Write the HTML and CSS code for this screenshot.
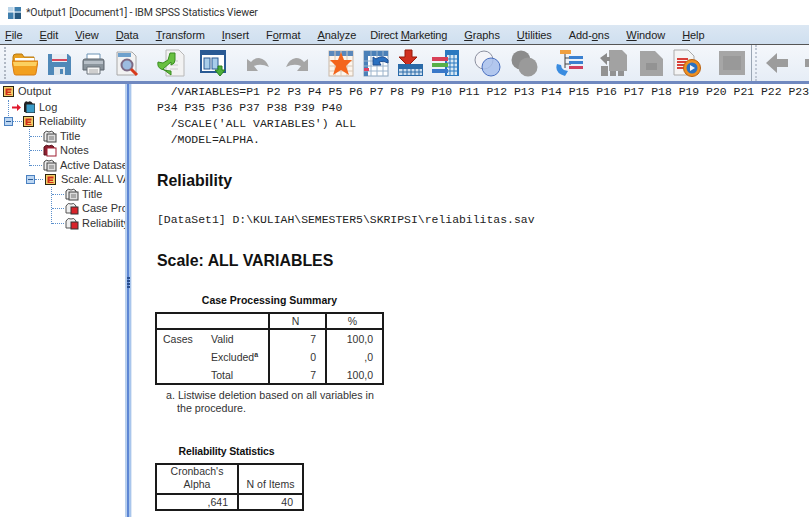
FILE: index.html
```html
<!DOCTYPE html>
<html>
<head>
    <title>*Output1 [Document1] - IBM SPSS Statistics Viewer</title>
    <link rel="stylesheet" href="styles.css">
</head>
<body>
    <svg class="defs" width="0" height="0">
        <symbol id="folder-book" viewBox="0 0 11 11">
            <rect x=".5" y=".5" width="10" height="10" fill="#f2cf68" stroke="#2c2410"/>
            <path d="M2.500 2.500h6v2h-4v1h3.500v1.500h-3.500v1h4v1h-6z" fill="#d0301c"/>
        </symbol>
        <symbol id="doc-page" viewBox="0 0 14 14">
            <path d="M1 4q2-3 5-1q3-2 5 1v8h-10z" fill="#f0f0f0" stroke="#444"/>
            <rect x="4" y="5" width="9" height="8" fill="#ddd" stroke="#444"/>
            <path d="M6 8h5M6 10h5" stroke="#777"/>
        </symbol>
        <symbol id="doc-red" viewBox="0 0 14 14">
            <path d="M1 5q2-4 5-2q3-2 5 2v7h-10z" fill="#eee" stroke="#555"/>
            <rect x="6" y="6" width="7" height="7" fill="#d8232a" stroke="#333"/>
        </symbol>
        <symbol id="undo-arrow" viewBox="0 0 23 28">
            <path d="M0 10v12h11l-4-5q7-3 15 1q-3-8-10-9q-5 0-8 4z" fill="#a6a6a6"/>
        </symbol>
    </svg>

    <div class="title-bar">
        <svg class="app-icon" width="15" height="15" viewBox="0 0 15 15">
            <rect x="1" y="2" width="13" height="12" fill="#3f7fae"/>
            <rect x="1" y="2" width="6" height="5" fill="#bcd6ea"/>
            <rect x="8" y="8" width="6" height="6" fill="#25587f"/>
            <path d="M7 1v13M1 7h13" stroke="#fff"/>
        </svg>
        <span>*Output1 [Document1] - IBM SPSS Statistics Viewer</span>
    </div>

    <div class="menu-bar">
        <span><u>F</u>ile</span>
        <span><u>E</u>dit</span>
        <span><u>V</u>iew</span>
        <span><u>D</u>ata</span>
        <span><u>T</u>ransform</span>
        <span><u>I</u>nsert</span>
        <span>F<u>o</u>rmat</span>
        <span><u>A</u>nalyze</span>
        <span class="menu-long">Direct <u>M</u>arketing</span>
        <span><u>G</u>raphs</span>
        <span><u>U</u>tilities</span>
        <span>Add-<u>o</u>ns</span>
        <span><u>W</u>indow</span>
        <span><u>H</u>elp</span>
    </div>

    <div class="tool-bar">
        <div class="grip"></div>
        <!-- open -->
        <svg width="26" height="28" viewBox="0 0 26 28">
            <path d="M1 8q0-3 3-3h6l2 3h10v5h-21z" fill="#e8a020" stroke="#b87810"/>
            <path d="M3 9h19v4h-19z" fill="#fff"/>
            <path d="M0 12h26l-2 12q0 2-2 2h-18q-2 0-2-2z" fill="#f2a020" stroke="#d87c10"/>
            <path d="M1 13h24l-1 4h-22z" fill="#fcd060"/>
        </svg>
        <!-- save -->
        <svg width="23" height="28" viewBox="0 0 23 28">
            <path d="M0 5h20l3 3v18h-23z" fill="#4f88b8"/>
            <path d="M4 5h15v8h-15z" fill="#e8eef4"/>
            <path d="M4 10h15v2h-15z" fill="#d8485c"/>
            <path d="M6 18h11v8h-11z" fill="#dfe6ec"/>
            <path d="M12 20h3v5h-3z" fill="#4f88b8"/>
        </svg>
        <!-- print -->
        <svg width="23" height="28" viewBox="0 0 23 28">
            <path d="M5 5h13v8h-13z" fill="#fff" stroke="#6a92b4"/>
            <path d="M1 12q0-2 2-2h17q2 0 2 2v9h-21z" fill="#8a949c" stroke="#5c646c"/>
            <path d="M2 12h19v3h-19z" fill="#b8c0c8"/>
            <path d="M5 18h13v7h-13z" fill="#f4f4f4" stroke="#6c747c"/>
            <path d="M7 21h9M7 23h9" stroke="#aaa"/>
        </svg>
        <!-- preview -->
        <svg width="24" height="28" viewBox="0 0 24 28">
            <path d="M1 3h15l4 4v19h-19z" fill="#f2f2f2" stroke="#a8a8a8"/>
            <path d="M2 4h13v4h-13z" fill="#6ea0cc"/>
            <circle cx="11" cy="16" r="5.500" fill="#9cbce0" stroke="#7c6a84" stroke-width="2"/>
            <path d="M15 20l6 6" stroke="#d83a1c" stroke-width="3"/>
        </svg>
        <!-- go to data -->
        <svg width="28" height="28" viewBox="0 0 28 28">
            <path d="M9 1h13l5 5v21h-18z" fill="#f2f2f2" stroke="#b8b8b8"/>
            <path d="M13 12h8M13 16h8M13 20h8" stroke="#ccc"/>
            <path d="M13 4h5v7q0 4-4 5v-3l-8 7 8 6v-4q-5 0-10-2q-4-2-3-7l5 1 5-3z" fill="#68c040" stroke="#388c20"/>
        </svg>
        <!-- designate window -->
        <svg width="26" height="28" viewBox="0 0 26 28">
            <rect x="1" y="2" width="24" height="21" fill="#fff" stroke="#2a5a94" stroke-width="2"/>
            <rect x="1" y="2" width="24" height="4" fill="#2a5a94"/>
            <rect x="4" y="9" width="6" height="11" fill="#a8cdea" stroke="#2a5a94"/>
            <rect x="12" y="9" width="6" height="11" fill="#a8cdea" stroke="#2a5a94"/>
            <path d="M18 17h4v4h3l-5 6-5-6h3z" fill="#4caf3a" stroke="#2a8020"/>
        </svg>
        <!-- undo, redo -->
        <svg width="23" height="28"><use href="#undo-arrow"/></svg>
        <svg class="mirror" width="23" height="28"><use href="#undo-arrow"/></svg>
        <!-- case table star -->
        <svg width="26" height="28" viewBox="0 0 26 28">
            <rect x="1" y="2" width="24" height="25" fill="#fdf5ec" stroke="#c8b8a8"/>
            <path d="M1 2h24v5h-24z" fill="#5a88bc"/>
            <path d="M7 2v25M13 2v25M19 2v25M1 12h24M1 17h24M1 22h24" stroke="#d8c8b8"/>
            <path d="M13 3l3 8h8l-6 6 3 9-8-5-8 5 3-9-6-6h8z" fill="#f4651c"/>
        </svg>
        <!-- go to variable -->
        <svg width="26" height="28" viewBox="0 0 26 28">
            <rect x="1" y="2" width="24" height="25" fill="#fff" stroke="#8ca4bc"/>
            <path d="M1 2h24v5h-24zM1 2h4v25h-4z" fill="#4a80b8"/>
            <path d="M8 2v25M14 2v25M20 2v25M1 12h24M1 17h24M1 22h24" stroke="#9cb4cc"/>
            <path d="M1 19h5v3h-5z" fill="#e04060"/>
            <path d="M25 11q-5-6-12-1l-3-2v8h8l-2-3q4-2 9 1z" fill="#2a70c0" stroke="#1c4c90"/>
        </svg>
        <!-- insert cases -->
        <svg width="27" height="28" viewBox="0 0 27 28">
            <path d="M8 1h7v7h5l-9 9-9-9h6z" fill="#d03020" stroke="#981808"/>
            <rect x="1" y="15" width="25" height="12" fill="#2a6aa8"/>
            <path d="M2 20h23v6h-23z" fill="#cfe0f0"/>
            <path d="M6 20v7M10 20v7M14 20v7M18 20v7M22 20v7M2 23h23" stroke="#2a6aa8"/>
        </svg>
        <!-- insert variable -->
        <svg width="28" height="28" viewBox="0 0 28 28">
            <rect x="14" y="1" width="14" height="26" fill="#2a78c0"/>
            <path d="M16 6h10v20h-10z" fill="#d8e8f4"/>
            <path d="M19 6v20M23 6v20M16 10h10M16 14h10M16 18h10M16 22h10" stroke="#2a78c0"/>
            <rect x="1" y="8" width="16" height="4" fill="#d84058"/>
            <rect x="1" y="14" width="16" height="4" fill="#58b048"/>
            <rect x="1" y="20" width="16" height="4" fill="#3a78c8"/>
        </svg>
        <!-- weight circles -->
        <svg width="27" height="28" viewBox="0 0 27 28">
            <circle cx="10" cy="11" r="9" fill="#f4f4f8" stroke="#8c90a0"/>
            <circle cx="17" cy="18" r="9" fill="#a8c0ec" stroke="#4a70c0" fill-opacity=".85"/>
        </svg>
        <!-- grey circles -->
        <svg width="27" height="28" viewBox="0 0 27 28">
            <circle cx="10" cy="11" r="9.500" fill="#8c8c8c"/>
            <circle cx="17" cy="18" r="9.500" fill="#9a9a9a"/>
        </svg>
        <!-- variable tree -->
        <svg width="28" height="28" viewBox="0 0 28 28">
            <rect x="5" y="1" width="11" height="4" fill="#f0a040"/>
            <path d="M10 5v14M10 9h6M10 15h6" stroke="#444"/>
            <rect x="14" y="7" width="14" height="3" fill="#3a80d0"/>
            <rect x="14" y="12" width="14" height="3" fill="#3a80d0"/>
            <rect x="14" y="17" width="14" height="3" fill="#d04060"/>
            <path d="M2 15q-3 9 8 12l3-5-4-1q-3-2-3-5z" fill="#3a8ce0"/>
        </svg>
        <!-- grey doc tools -->
        <svg width="27" height="28" viewBox="0 0 27 28">
            <path d="M9 1h13l5 5v16h-18z" fill="#a2a2a2"/>
            <path d="M0 9l7-5v4h3v4h-3v4z" fill="#8a8a8a"/>
            <path d="M1 17h7v10h-7zM10 22h6v5h-6zM18 22h6v5h-6z" fill="#929292"/>
        </svg>
        <svg width="23" height="28" viewBox="0 0 23 28">
            <path d="M0 2h15l8 8v17h-23z" fill="#a4a4a4"/>
            <path d="M6 14h11v7h-11z" fill="#939393"/>
        </svg>
        <!-- script run -->
        <svg width="28" height="28" viewBox="0 0 28 28">
            <path d="M1 1h14l6 6v19h-20z" fill="#f4f4f4" stroke="#aaa"/>
            <path d="M4 10h11M4 13h9M4 16h9M4 19h7" stroke="#d84038" stroke-width="2"/>
            <circle cx="19" cy="19" r="8.500" fill="#f09020" stroke="#b86010"/>
            <circle cx="19" cy="19" r="5.500" fill="#2a70c0"/>
            <path d="M17 16l5 3-5 3z" fill="#f4f4f4"/>
        </svg>
        <!-- grey box -->
        <svg width="26" height="28" viewBox="0 0 26 28">
            <rect y="2" width="26" height="24" fill="#a6a6a6"/>
            <rect x="4" y="7" width="18" height="14" fill="#999"/>
        </svg>
        <div class="tool-sep"></div>
        <!-- previous -->
        <svg width="22" height="28" viewBox="0 0 22 28">
            <path d="M0 14l11-10v6h11v8h-11v6z" fill="#9c9c9c"/>
        </svg>
        <svg width="22" height="28" viewBox="0 0 22 28">
            <path d="M0 10h22v8h-22z" fill="#9c9c9c"/>
        </svg>
    </div>

    <div class="pane-strip"></div>

    <div class="panes">
        <nav class="tree">
            <div class="tree-row top">
                <svg class="node" width="11" height="11"><use href="#folder-book"/></svg>Output
            </div>
            <div class="tree-branch b0">
                <div class="tree-row lvl1 log">
                    <svg class="arrow" width="9" height="7" viewBox="0 0 9 7"><path d="M0 2.500h5v-2.500l4 3.500-4 3.500v-2.500h-5z" fill="#e0182c"/></svg>
                    <svg class="node" width="12" height="13" viewBox="0 0 12 13">
                        <path d="M1 4q1-4 4-2q3-2 5 2v8h-9z" fill="#222"/>
                        <rect x="3" y="4" width="9" height="9" fill="#3a9cc8" stroke="#222"/>
                    </svg>Log
                </div>
                <div class="tree-row lvl1 branch-node">
                    <span class="toggle t0"></span>
                    <svg class="node" width="11" height="11"><use href="#folder-book"/></svg>Reliability
                </div>
            </div>
            <div class="tree-branch b1">
                <div class="tree-row lvl2 leaf"><svg class="node" width="14" height="14"><use href="#doc-page"/></svg>Title</div>
                <div class="tree-row lvl2 leaf">
                    <svg class="node" width="14" height="14" viewBox="0 0 14 14">
                        <path d="M1 4q2-3 5-1q3-2 5 1v8h-10z" fill="#8c2030" stroke="#541018"/>
                        <rect x="4" y="5" width="9" height="8" fill="#fff" stroke="#a01c30"/>
                    </svg>Notes
                </div>
                <div class="tree-row lvl2 leaf"><svg class="node" width="14" height="14"><use href="#doc-page"/></svg>Active Dataset</div>
                <div class="tree-row lvl2 branch-node leaf">
                    <span class="toggle t1"></span>
                    <svg class="node book-small" width="11" height="11"><use href="#folder-book"/></svg>Scale: ALL VARIABLES
                </div>
            </div>
            <div class="tree-branch b2">
                <div class="tree-row lvl3 leaf"><svg class="node" width="14" height="14"><use href="#doc-page"/></svg>Title</div>
                <div class="tree-row lvl3 leaf"><svg class="node" width="14" height="14"><use href="#doc-red"/></svg>Case Processing Summary</div>
                <div class="tree-row lvl3 leaf"><svg class="node" width="14" height="14"><use href="#doc-red"/></svg>Reliability Statistics</div>
            </div>
        </nav>

        <div class="splitter"><span class="splitter-dots"></span></div>

        <main class="output">
            <pre class="syntax">  /VARIABLES=P1 P2 P3 P4 P5 P6 P7 P8 P9 P10 P11 P12 P13 P14 P15 P16 P17 P18 P19 P20 P21 P22 P23 P24
P34 P35 P36 P37 P38 P39 P40
  /SCALE('ALL VARIABLES') ALL
  /MODEL=ALPHA.</pre>

            <h2 class="heading first">Reliability</h2>
            <pre class="dataset">[DataSet1] D:\KULIAH\SEMESTER5\SKRIPSI\reliabilitas.sav</pre>
            <h2 class="heading second">Scale: ALL VARIABLES</h2>

            <div class="spss-table case-table">
                <div class="table-title">Case Processing Summary</div>
                <table>
                    <thead>
                        <tr><th colspan="2" class="c-label"></th><th class="c-n">N</th><th class="c-pct">%</th></tr>
                    </thead>
                    <tbody>
                        <tr><td class="c-group">Cases</td><td class="c-name">Valid</td><td class="num">7</td><td class="num">100,0</td></tr>
                        <tr><td></td><td class="c-name">Excluded<sup>a</sup></td><td class="num">0</td><td class="num">,0</td></tr>
                        <tr class="row-last"><td></td><td class="c-name">Total</td><td class="num">7</td><td class="num">100,0</td></tr>
                    </tbody>
                </table>
                <p class="footnote">a. Listwise deletion based on all variables in the procedure.</p>
            </div>

            <div class="spss-table rel-table">
                <div class="table-title">Reliability Statistics</div>
                <table>
                    <thead>
                        <tr><th class="c-alpha">Cronbach's Alpha</th><th class="c-items">N of Items</th></tr>
                    </thead>
                    <tbody>
                        <tr><td class="num">,641</td><td class="num">40</td></tr>
                    </tbody>
                </table>
            </div>
        </main>
    </div>
</body>
</html>
```

FILE: styles.css
```css
html, body {
    margin: 0;
    height: 517px;
    overflow: hidden;
}
body {
    display: flex;
    flex-direction: column;
    font-family: "Liberation Sans", Arial, sans-serif;
    font-size: 11px;
    color: #222;
    background: #fff;
}
.defs { position: absolute; }

/* window chrome */
.title-bar {
    height: 25px;
    flex: none;
    display: flex;
    align-items: center;
    padding-left: 7px;
    gap: 4px;
    font-family: "Roboto", sans-serif;
    font-size: 10.500px;
    letter-spacing: -.16px;
    color: #333;
}
.menu-bar {
    height: 20px;
    flex: none;
    box-sizing: border-box;
    display: flex;
    align-items: center;
    gap: 17px;
    padding-left: 5px;
    letter-spacing: -.06px;
    background: linear-gradient(#dbe7f3, #cfdfef);
    border-bottom: 1px solid #555;
    white-space: nowrap;
}
.menu-long { margin-left: -3px; letter-spacing: -.2px; }
.tool-bar {
    height: 36px;
    flex: none;
    box-sizing: border-box;
    display: grid;
    grid-template-columns: 36px 34px 34px 41px 43px 47px 38px 43px 35px 34px 34px 43px 37px 44px 45px 40px 33px 46px 32px 15px 39px 22px;
    align-items: center;
    padding-left: 12px;
    background: linear-gradient(#f4f7fb, #e6edf6);
    position: relative;
    overflow: hidden;
}
.mirror { transform: scaleX(-1); }
.grip {
    position: absolute;
    left: 4px;
    top: 2px;
    bottom: 2px;
    border-left: 2px dotted #b0b8c4;
}
.tool-sep {
    height: 100%;
    border-left: 1px solid #9aa6b4;
    border-right: 2px dotted #c0c8d4;
    width: 3px;
}
.pane-strip {
    height: 3px;
    flex: none;
    background: #7089c0;
}

/* panes */
.panes {
    flex: 1;
    display: flex;
    min-height: 0;
}
.tree {
    width: 125px;
    flex: none;
    overflow: hidden;
    white-space: nowrap;
    color: #333;
}
.splitter {
    width: 7px;
    flex: none;
    display: flex;
    align-items: center;
    justify-content: center;
    background: linear-gradient(90deg, #b9d0ee 0 2px, #5d86d4 2px 4px, #a9c6ec 4px 6px, #dfe9f6 6px);
}
.splitter-dots {
    width: 3px;
    height: 12px;
    margin-bottom: 35px;
    background: repeating-linear-gradient(#2a5090 0 2px, transparent 2px 3px);
}

/* outline tree */
.tree-branch { position: relative; }
.tree-row {
    height: 14.500px;
    display: flex;
    align-items: center;
    position: relative;
}
.node { flex: none; margin-right: 5px; }
.top { padding-left: 3px; margin-bottom: 1px; }
.top .node { margin-right: 4px; }
.lvl1 { padding-left: 23px; }
.log .node { margin-right: 4px; }
.lvl2 { padding-left: 43px; }
.lvl2 .node, .lvl3 .node { margin-right: 3px; }
.lvl3 { padding-left: 65px; }
.book-small { margin-left: 2px; margin-right: 5px !important; }
.log .arrow { position: absolute; left: 12px; top: 4px; }
.toggle {
    position: absolute;
    width: 7px;
    height: 7px;
    top: 3px;
    border: 1px solid #4a80c0;
    background: #bcd6f2;
    box-sizing: content-box;
}
.toggle::after {
    content: "";
    position: absolute;
    left: 1px;
    right: 1px;
    top: 3px;
    height: 1px;
    background: #2a5a94;
}
.toggle.t0 { left: 4px; }
.toggle.t1 { left: 26px; }
.branch-node::before {
    content: "";
    position: absolute;
    left: 13px;
    width: 9px;
    top: 7px;
    border-top: 1px dotted #5c90cc;
}
.b0::before, .b1::before, .b2::before {
    content: "";
    position: absolute;
    border-left: 1px dotted #5c90cc;
}
.b0::before { left: 8px; top: 0; height: 22px; }
.b1::before { left: 29px; top: 0; height: 37px; }
.b2::before { left: 51px; top: 0; height: 37px; }
.leaf::before {
    content: "";
    position: absolute;
    width: 12px;
    top: 7px;
    border-top: 1px dotted #5c90cc;
}
.lvl2.leaf::before { left: 30px; }
.lvl3.leaf::before { left: 52px; }
.lvl2.branch-node::before { left: 35px; width: 8px; }

/* viewer */
.output {
    flex: 1;
    min-width: 0;
    overflow: hidden;
    padding-left: 25px;
}
pre {
    margin: 0;
    font-family: "Liberation Mono", "Courier New", monospace;
    font-size: 11.450px;
    line-height: 16px;
    color: #222;
    white-space: pre;
}
.heading {
    margin: 0;
    font-size: 15.900px;
    line-height: 20px;
    font-weight: bold;
    color: #111;
}
.heading.first { margin-top: 23px; }
.dataset { margin-top: 21px; }
.heading.second { margin-top: 23px; }
.spss-table {
    display: flex;
    flex-direction: column;
    align-items: center;
    width: max-content;
    margin-left: -2px;
}
.case-table { margin-top: 23px; }
.rel-table { margin-top: 30px; }
.table-title {
    font-size: 10.500px;
    font-weight: bold;
    line-height: 13px;
    color: #111;
    margin-bottom: 5px;
}
.rel-table .table-title { letter-spacing: -.15px; padding-right: 6px; }
table {
    border-collapse: collapse;
    border: 2px solid #1a1a1a;
    font-size: 10.500px;
    color: #333;
}
th { font-weight: normal; border-left: 2px solid #1a1a1a; padding: 0; }
th:first-child { border-left: 0; }
thead { border-bottom: 2px solid #1a1a1a; }
td { padding: 0; height: 18px; }
td.num { text-align: right; border-left: 2px solid #1a1a1a; padding-right: 9px; }
.c-label { width: 111px; }
.c-n { width: 51px; height: 14px; padding-right: 4px; }
.c-pct { width: 51px; padding-right: 4px; }
.c-group { width: 48px; padding-left: 6px; }
.c-name { width: 57px; }
.row-last td { height: 17px; }
sup { font-size: 7px; font-weight: bold; line-height: 0; vertical-align: 4px; }
.footnote {
    align-self: flex-start;
    margin: 4px 0 0;
    width: 200px;
    padding-left: 22px;
    text-indent: -11px;
    line-height: 13px;
    font-size: 10.700px;
    color: #333;
}
.c-alpha, .c-items { line-height: 13px; padding-bottom: 2px; vertical-align: bottom; }
.c-alpha { width: 80px; }
.c-items { width: 63px; }
.rel-table td { height: 14px; }
```
